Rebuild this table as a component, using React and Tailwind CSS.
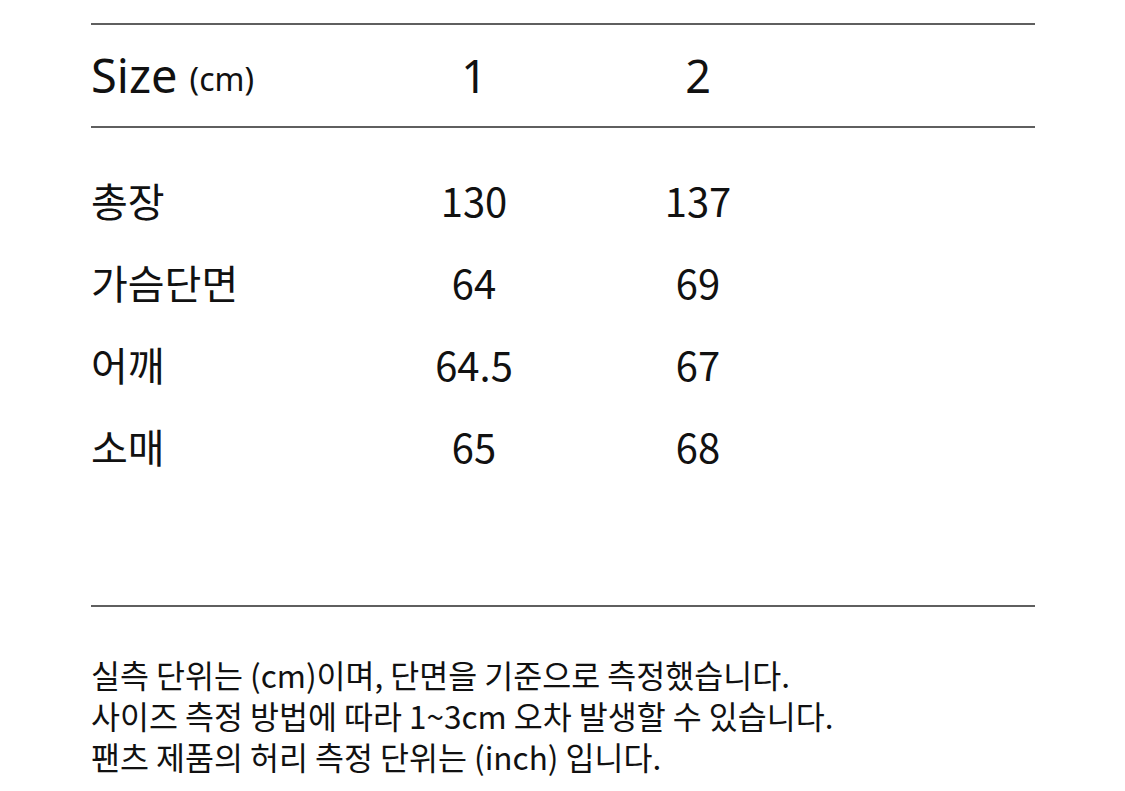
import React from 'react';

const rows = [
  ['총장', '130', '137'],
  ['가슴단면', '64', '69'],
  ['어깨', '64.5', '67'],
  ['소매', '65', '68'],
];

const notes = [
  '실측 단위는 (cm)이며, 단면을 기준으로 측정했습니다.',
  '사이즈 측정 방법에 따라 1~3cm 오차 발생할 수 있습니다.',
  '팬츠 제품의 허리 측정 단위는 (inch) 입니다.',
];

export default function App() {
  return (
    <div
      className="min-h-screen bg-white text-[#111] pt-[23px] pl-[91px] pr-[90px]"
      style={{ fontFamily: '"Noto Sans", "Noto Sans CJK KR", sans-serif' }}
    >
      {/* header row */}
      <div className="border-t-2 border-b-2 border-[#5f5f5f] h-[105px] grid grid-cols-[271px_224px_224px_1fr] items-center">
        <div className="flex items-baseline">
          <span className="text-[47px] leading-none">Size</span>
          <span className="text-[32px] leading-none ml-[12px] relative -top-[2px]">(cm)</span>
        </div>
        <div className="text-center text-[45px] leading-none">1</div>
        <div className="text-center text-[45px] leading-none">2</div>
        <div></div>
      </div>

      {/* measurements */}
      <div
        className="pt-[31px] pb-[118px] border-b-2 border-[#5f5f5f]"
        style={{ fontFamily: '"Noto Sans CJK KR", sans-serif' }}
      >
        {rows.map((r) => (
          <div key={r[0]} className="h-[82px] grid grid-cols-[271px_224px_224px_1fr] items-center text-[40px]">
            <div>{r[0]}</div>
            <div className="text-center">{r[1]}</div>
            <div className="text-center">{r[2]}</div>
            <div></div>
          </div>
        ))}
      </div>

      {/* notes */}
      <div
        className="pt-[47px] text-[31.5px] leading-[41px]"
        style={{ fontFamily: '"Noto Sans CJK KR", sans-serif' }}
      >
        {notes.map((n) => (
          <p key={n}>{n}</p>
        ))}
      </div>
    </div>
  );
}
